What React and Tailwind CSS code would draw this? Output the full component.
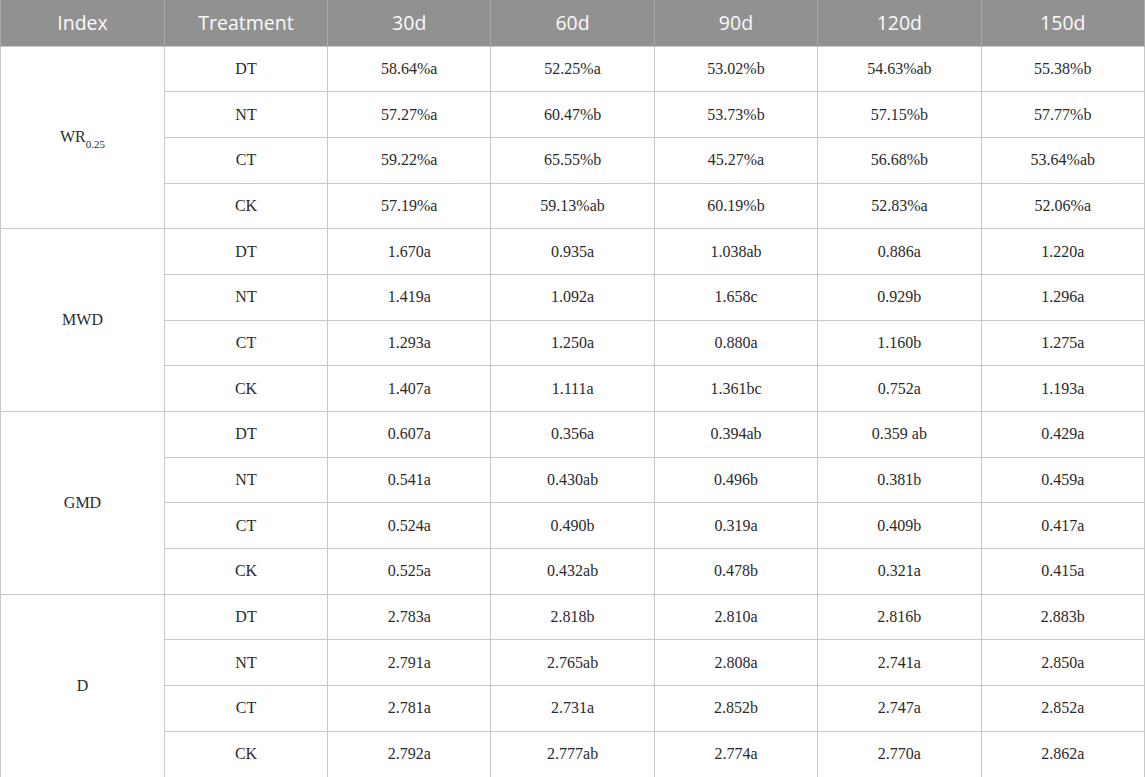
const cols = ['30d', '60d', '90d', '120d', '150d'];

const groups = [
  {
    index: <>WR<sub className="text-[11px] align-[-3px]">0.25</sub></>,
    rows: [
      ['DT', '58.64%a', '52.25%a', '53.02%b', '54.63%ab', '55.38%b'],
      ['NT', '57.27%a', '60.47%b', '53.73%b', '57.15%b', '57.77%b'],
      ['CT', '59.22%a', '65.55%b', '45.27%a', '56.68%b', '53.64%ab'],
      ['CK', '57.19%a', '59.13%ab', '60.19%b', '52.83%a', '52.06%a'],
    ],
  },
  {
    index: 'MWD',
    rows: [
      ['DT', '1.670a', '0.935a', '1.038ab', '0.886a', '1.220a'],
      ['NT', '1.419a', '1.092a', '1.658c', '0.929b', '1.296a'],
      ['CT', '1.293a', '1.250a', '0.880a', '1.160b', '1.275a'],
      ['CK', '1.407a', '1.111a', '1.361bc', '0.752a', '1.193a'],
    ],
  },
  {
    index: 'GMD',
    rows: [
      ['DT', '0.607a', '0.356a', '0.394ab', '0.359 ab', '0.429a'],
      ['NT', '0.541a', '0.430ab', '0.496b', '0.381b', '0.459a'],
      ['CT', '0.524a', '0.490b', '0.319a', '0.409b', '0.417a'],
      ['CK', '0.525a', '0.432ab', '0.478b', '0.321a', '0.415a'],
    ],
  },
  {
    index: 'D',
    rows: [
      ['DT', '2.783a', '2.818b', '2.810a', '2.816b', '2.883b'],
      ['NT', '2.791a', '2.765ab', '2.808a', '2.741a', '2.850a'],
      ['CT', '2.781a', '2.731a', '2.852b', '2.747a', '2.852a'],
      ['CK', '2.792a', '2.777ab', '2.774a', '2.770a', '2.862a'],
    ],
  },
];

const cell = 'border border-[#c8c8c8] text-center align-middle';

export default function App() {
  return (
    <div className="w-[1145px] h-[777px] overflow-hidden bg-white">
      <table className="w-[1145px] border-collapse table-fixed">
        <thead>
          <tr className="h-[46px] bg-[#919191] text-[#fafafa] font-['Open_Sans',sans-serif] text-[19.5px]">
            <th className="font-normal border-x border-[#ababab] w-[164px]">Index</th>
            <th className="font-normal border-x border-[#ababab] w-[163px]">Treatment</th>
            {cols.map(c => (
              <th key={c} className="font-normal border-x border-[#ababab]">{c}</th>
            ))}
          </tr>
        </thead>
        <tbody className="font-['Liberation_Serif',serif] text-[16px] text-[#2a2a2a]">
          {groups.map((g, gi) =>
            g.rows.map((r, ri) => (
              <tr key={`${gi}-${ri}`} className="h-[45.7px]">
                {ri === 0 && (
                  <td rowSpan={4} className={cell}>{g.index}</td>
                )}
                {r.map((v, vi) => (
                  <td key={vi} className={cell}>{v}</td>
                ))}
              </tr>
            ))
          )}
        </tbody>
      </table>
    </div>
  );
}
